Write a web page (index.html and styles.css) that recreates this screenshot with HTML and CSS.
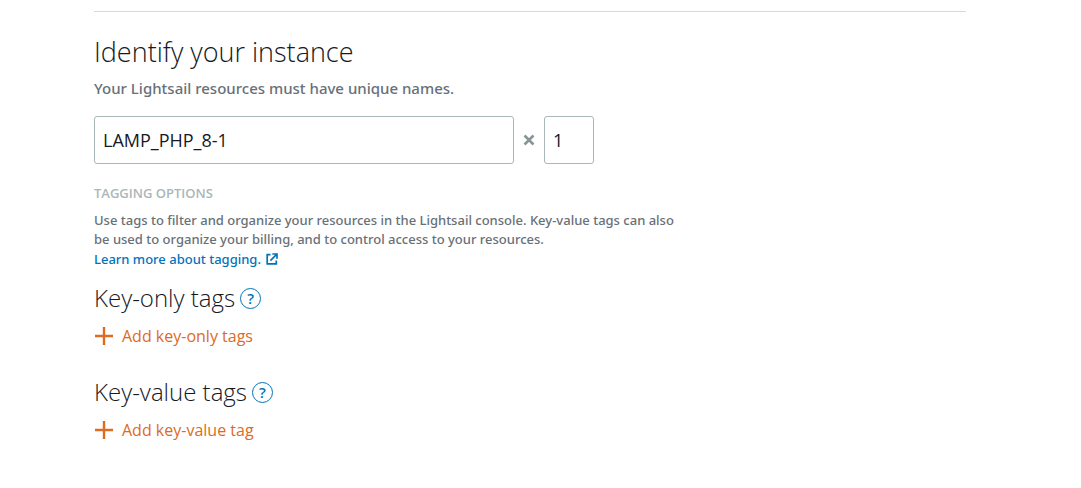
FILE: index.html
```html
<!DOCTYPE html>
<html lang="en">
<head>
<meta charset="utf-8">
<meta name="viewport" content="width=device-width, initial-scale=1">
<title>Identify your instance</title>
<link rel="stylesheet" href="styles.css">
</head>
<body>
<main class="page">
  <section class="identify">
    <h1 class="title">Identify your instance</h1>
    <p class="subtitle">Your Lightsail resources must have unique names.</p>
    <div class="name-row">
      <input class="field field-name" type="text" value="LAMP_PHP_8-1" aria-label="Instance name" spellcheck="false">
      <svg class="times" viewBox="0 0 12 12" aria-hidden="true"><path d="M1.5 1.5l9 9M10.5 1.5l-9 9"/></svg>
      <input class="field field-count" type="text" inputmode="numeric" value="1" aria-label="Number of instances">
    </div>
    <h2 class="label">TAGGING OPTIONS</h2>
    <p class="help">Use tags to filter and organize your resources in the Lightsail console. Key-value tags can also be used to organize your billing, and to control access to your resources.</p>
    <a class="learn" href="#tagging">Learn more about tagging.
      <svg class="external" viewBox="0 0 12 12" aria-hidden="true"><path d="M4.5 1.7H1.2v9.1h9.1V7.5M6.3 1h4.7v4.7M11 1L4.4 7.6"/></svg>
    </a>
    <div class="tag-group">
      <div class="tag-head">
        <h3 class="tag-title">Key-only tags</h3>
        <button class="info" type="button" aria-label="About key-only tags">?</button>
      </div>
      <button class="add" type="button">
        <svg class="plus" viewBox="0 0 18 18" aria-hidden="true"><path d="M9 0v18M0 9h18"/></svg>
        Add key-only tags
      </button>
    </div>
    <div class="tag-group">
      <div class="tag-head">
        <h3 class="tag-title">Key-value tags</h3>
        <button class="info" type="button" aria-label="About key-value tags">?</button>
      </div>
      <button class="add" type="button">
        <svg class="plus" viewBox="0 0 18 18" aria-hidden="true"><path d="M9 0v18M0 9h18"/></svg>
        Add key-value tag
      </button>
    </div>
  </section>
</main>
</body>
</html>
```
FILE: styles.css
```css
* {
  box-sizing: border-box;
}

body {
  margin: 0;
  background: #fff;
  color: #16191f;
  font-family: "Open Sans", "Noto Sans", sans-serif;
}

h1, h2, h3, p {
  margin: 0;
}

button {
  padding: 0;
  border: 0;
  background: none;
  font: inherit;
  cursor: pointer;
}

svg {
  flex: none;
  fill: none;
  stroke: currentColor;
}

.page {
  padding: 11px 115px 40px 94px;
}

.identify {
  display: flex;
  flex-direction: column;
  align-items: flex-start;
  border-top: 1px solid #d5dbdb;
  padding-top: 22px;
}

.title {
  font-size: 27px;
  line-height: 36px;
  font-weight: 300;
}

.subtitle,
.help,
.learn {
  font-family: "Noto Sans", "Open Sans", sans-serif;
  font-weight: 500;
}

.subtitle {
  margin-top: 6px;
  color: #687078;
  font-size: 15px;
  line-height: 24px;
}

.name-row {
  display: flex;
  align-items: center;
  gap: 9px;
  margin-top: 16px;
}

.field {
  height: 48px;
  padding: 0 8px;
  border: 1px solid #aab7b8;
  border-radius: 3px;
  background: #fff;
  color: #16191f;
  font-family: inherit;
  font-size: 18px;
}

.field-name {
  width: 420px;
}

.field-count {
  width: 50px;
}

.times {
  width: 12px;
  height: 12px;
  color: #879596;
  stroke-width: 2.6;
}

.label {
  margin-top: 19px;
  color: #aab7b8;
  font-size: 13px;
  line-height: 20px;
  font-weight: 600;
}

.help {
  max-width: 592px;
  margin-top: 8px;
  color: #687078;
  font-size: 13px;
  line-height: 19px;
}

.learn {
  display: inline-flex;
  align-items: center;
  gap: 5px;
  color: #0073bb;
  font-size: 13px;
  line-height: 20px;
  text-decoration: none;
}

.external {
  width: 12px;
  height: 12px;
  stroke-width: 1.7;
}

.tag-group {
  margin-top: 13px;
}

.tag-group + .tag-group {
  margin-top: 28px;
}

.tag-head {
  display: flex;
  align-items: center;
  gap: 5px;
}

.tag-title {
  font-size: 24px;
  line-height: 32px;
  font-weight: 300;
}

.info {
  width: 21px;
  height: 21px;
  border: 1px solid #0073bb;
  border-radius: 50%;
  color: #0073bb;
  font-size: 15px;
  line-height: 19px;
  font-weight: 600;
}

.add {
  display: flex;
  align-items: center;
  gap: 9px;
  margin-top: 10px;
  padding-left: 1px;
  color: #dd6b20;
  font-size: 16px;
  line-height: 24px;
}

.plus {
  width: 18px;
  height: 18px;
  stroke-width: 2.4;
}
```
